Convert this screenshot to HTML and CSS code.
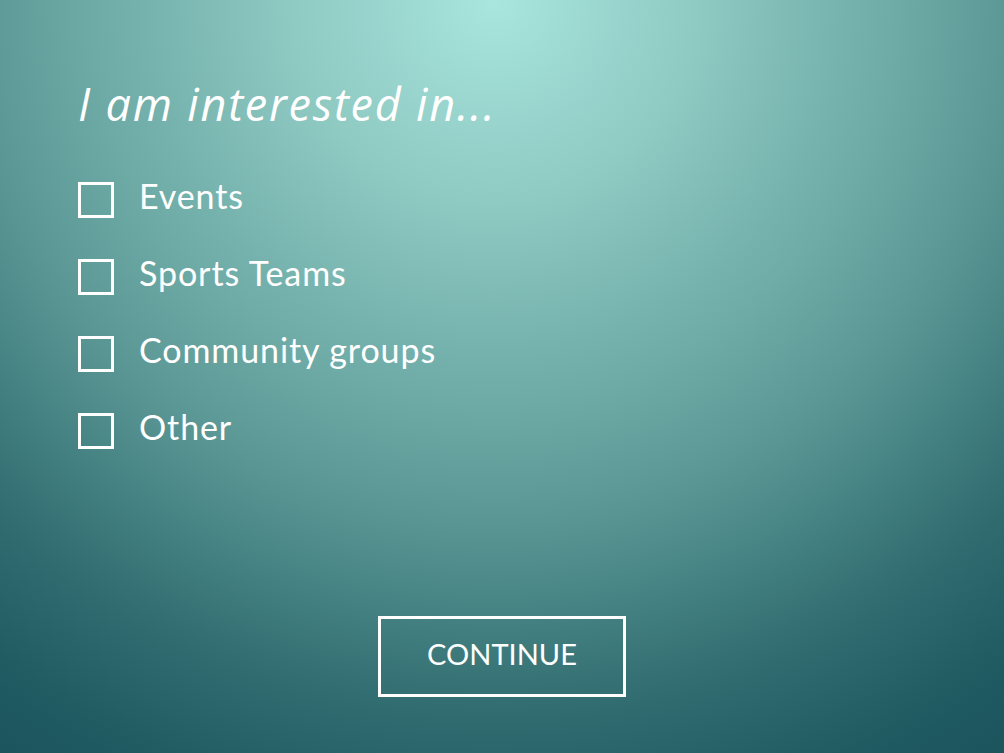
FILE: index.html
```html
<!DOCTYPE html>
<html lang="en">
<head>
<meta charset="utf-8">
<title>Interests</title>
<link rel="stylesheet" href="styles.css">
</head>
<body>
<main class="screen">
  <h1 class="title">I am interested in...</h1>
  <ul class="options">
    <li class="option"><span class="box"></span><span class="label">Events</span></li>
    <li class="option"><span class="box"></span><span class="label">Sports Teams</span></li>
    <li class="option"><span class="box"></span><span class="label">Community groups</span></li>
    <li class="option"><span class="box"></span><span class="label">Other</span></li>
  </ul>
  <div class="actions">
    <button class="continue" type="button">CONTINUE</button>
  </div>
</main>
</body>
</html>
```
FILE: styles.css
```css
html, body {
  margin: 0;
  padding: 0;
}

body {
  font-family: Lato, "Open Sans", "Liberation Sans", sans-serif;
  color: #ffffff;
}

.screen {
  width: 1004px;
  height: 753px;
  box-sizing: border-box;
  display: flex;
  flex-direction: column;
  padding: 81px 0 56px 78px;
  background: radial-gradient(circle at 495px 0, #a8e6de 0, #8fcac3 200px, #5e9b98 500px, #2f6b6f 720px, #1e5860 850px, #1b525a 950px);
  overflow: hidden;
}

.title {
  margin: 0;
  font-family: "Open Sans", Lato, sans-serif;
  font-size: 45px;
  line-height: 46px;
  font-style: italic;
  font-weight: 400;
  letter-spacing: 1.8px;
}

.options {
  list-style: none;
  margin: 55px 0 0;
  padding: 0;
  display: flex;
  flex-direction: column;
  gap: 41px;
}

.option {
  display: flex;
  align-items: flex-start;
  gap: 25px;
  height: 36px;
}

.box {
  width: 36px;
  height: 36px;
  box-sizing: border-box;
  border: 3px solid #ffffff;
  flex: none;
}

.label {
  font-size: 34px;
  line-height: 28px;
  letter-spacing: 0.9px;
}

.actions {
  margin-top: auto;
  display: flex;
  justify-content: center;
  margin-left: -78px;
}

.continue {
  width: 248px;
  height: 81px;
  box-sizing: border-box;
  border: 3px solid #ffffff;
  background: transparent;
  color: #ffffff;
  font-family: Lato, "Open Sans", "Liberation Sans", sans-serif;
  font-size: 29px;
  line-height: 29px;
  padding: 0 0 6px;
  display: flex;
  align-items: center;
  justify-content: center;
}
```
